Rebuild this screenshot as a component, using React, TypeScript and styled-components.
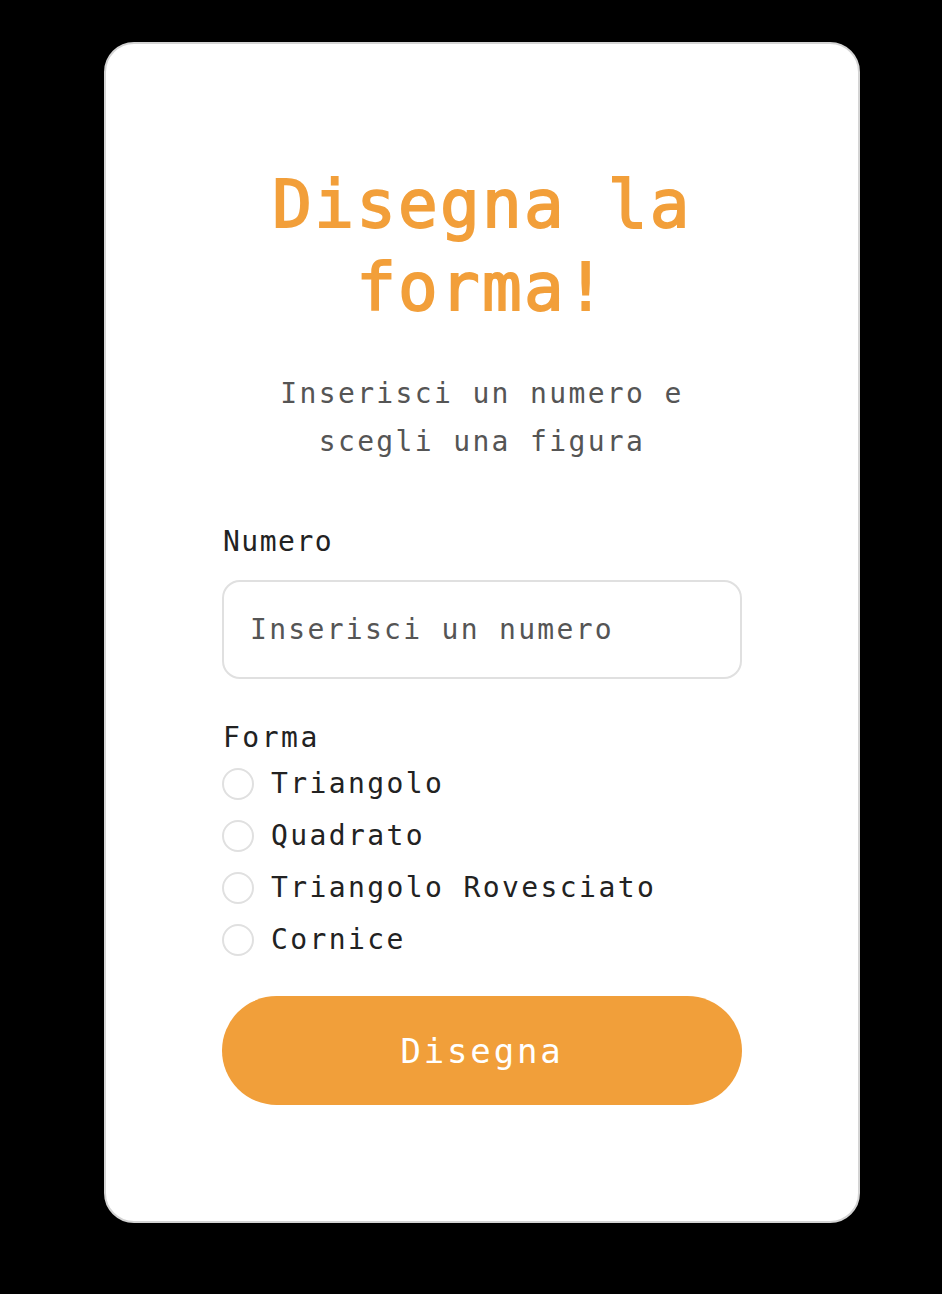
import React, { useState } from "react";
import styled, { createGlobalStyle } from "styled-components";

const GlobalStyle = createGlobalStyle`
  html, body {
    margin: 0;
    padding: 0;
    background: #000;
  }
  body {
    font-family: "DejaVu Sans Mono", "Liberation Mono", monospace;
  }
`;

const Page = styled.div`
  display: flex;
  justify-content: center;
  padding: 42px 0 72px 22px;
`;

const Card = styled.form`
  box-sizing: border-box;
  width: 756px;
  background: #fff;
  border: 2px solid #d4d4d4;
  border-radius: 30px;
  padding: 119px 116px 116px 116px;
  display: flex;
  flex-direction: column;
`;

const Title = styled.h1`
  margin: 0;
  font-size: 66px;
  line-height: 83px;
  font-weight: 400;
  letter-spacing: 2.2px;
  color: #f29f3a;
  -webkit-text-stroke: 1.8px #f29f3a;
  text-align: center;
`;

const Subtitle = styled.p`
  margin: 41px 0 0;
  font-size: 28px;
  line-height: 48px;
  letter-spacing: 2.35px;
  color: #555;
  text-align: center;
  padding: 0 40px;
`;

const FieldLabel = styled.label<{ $gap: number; $spacing: number }>`
  display: block;
  margin-top: ${(p) => p.$gap}px;
  padding-left: 1px;
  font-size: 28px;
  line-height: 34px;
  letter-spacing: ${(p) => p.$spacing}px;
  color: #222;
`;

const Input = styled.input`
  box-sizing: border-box;
  margin-top: 21px;
  width: 100%;
  height: 99px;
  border: 2px solid #e0e0e0;
  border-radius: 18px;
  padding: 0 26px;
  font-family: "DejaVu Sans Mono", "Liberation Mono", monospace;
  font-size: 28px;
  letter-spacing: 2.3px;
  color: #222;
  outline: none;
  &::placeholder {
    color: #555;
  }
`;

const Options = styled.div`
  margin-top: 3px;
  display: flex;
  flex-direction: column;
`;

const Option = styled.label`
  display: flex;
  align-items: center;
  height: 52px;
  gap: 17px;
  font-size: 28px;
  line-height: 34px;
  letter-spacing: 2.4px;
  color: #222;
  cursor: pointer;
`;

const Radio = styled.input`
  appearance: none;
  box-sizing: border-box;
  margin: 0;
  width: 32px;
  height: 32px;
  border: 2px solid #e0e0e0;
  border-radius: 50%;
  background: #fff;
  &:checked {
    border: 9px solid #f29f3a;
  }
`;

const Button = styled.button`
  margin-top: 30px;
  width: 100%;
  height: 109px;
  border: none;
  border-radius: 55px;
  background: #f19f3a;
  color: #fff;
  font-family: "DejaVu Sans Mono", "Liberation Mono", monospace;
  font-size: 34px;
  letter-spacing: 2.8px;
  cursor: pointer;
`;

const shapes = ["Triangolo", "Quadrato", "Triangolo Rovesciato", "Cornice"];

export default function App() {
  const [shape, setShape] = useState("");
  return (
    <>
      <GlobalStyle />
      <Page>
        <Card onSubmit={(e) => e.preventDefault()}>
          <Title>Disegna la forma!</Title>
          <Subtitle>Inserisci un numero e scegli una figura</Subtitle>
          <FieldLabel $gap={59} $spacing={1.5} htmlFor="numero">
            Numero
          </FieldLabel>
          <Input id="numero" type="number" placeholder="Inserisci un numero" />
          <FieldLabel $gap={42} $spacing={2.5} as="div">
            Forma
          </FieldLabel>
          <Options>
            {shapes.map((s) => (
              <Option key={s}>
                <Radio
                  type="radio"
                  name="forma"
                  value={s}
                  checked={shape === s}
                  onChange={() => setShape(s)}
                />
                {s}
              </Option>
            ))}
          </Options>
          <Button type="submit">Disegna</Button>
        </Card>
      </Page>
    </>
  );
}
